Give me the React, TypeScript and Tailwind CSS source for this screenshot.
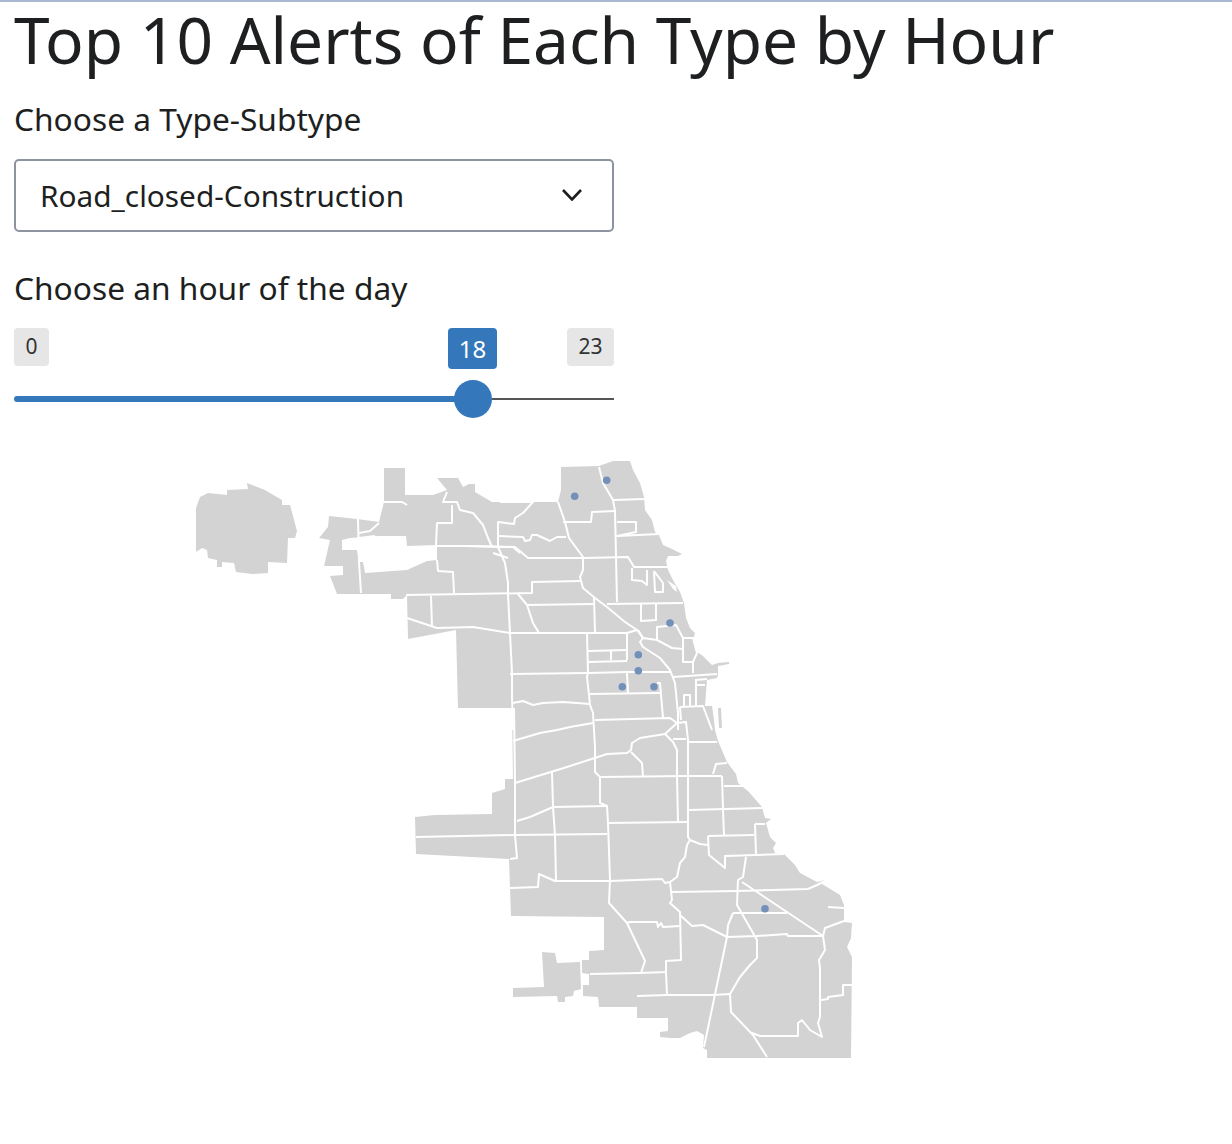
const MAP_OUTLINE =
  '561,467 599,466 613,461 630,461 633,470 640,483 644,497 645,510 652,520 655,532 659,535 663,545 672,549 682,554 678,556 668,556 666,561 668,570 674,582 680,592 684,603 686,618 690,628 695,633 693,640 697,652 703,656 712,665 718,663 729,662 729,664 718,666 718,675 717,678 707,680 705,706 712,706 714,720 715,730 718,741 727,762 736,774 738,783 748,791 762,807 765,818 771,819 766,823 770,837 776,843 773,848 775,853 784,854 795,865 800,873 817,882 825,880 822,884 840,895 844,905 844,922 852,923 851,938 847,947 852,957 851,1058 707,1058 707,1050 703,1048 704,1035 697,1031 690,1033 680,1038 670,1038 660,1037 660,1032 668,1031 668,1018 637,1018 637,1007 599,1007 598,997 583,996 583,985 589,985 589,974 582,973 582,960 589,960 589,951 604,950 604,917 511,916 510,888 509,859 416,854 415,817 435,815 492,814 492,793 505,789 505,779 513,779 512,708 458,708 456,630 408,639 407,595 403,599 391,599 391,594 337,594 330,576 343,575 343,566 324,566 330,540 319,538 328,527 329,516 357,519 379,522 384,502 384,468 405,468 405,495 433,495 447,490 437,478 451,478 458,478 463,487 469,484 475,484 475,492 492,502 520,502 540,502 558,502 561,490';
const MAP_HOLE =
  '357,550 342,550 342,540 350,538 379,536 406,536 407,546 437,545 437,560 427,561 407,570 365,573 363,562 359,562';
const WEST_PIECE =
  '542,952 555,953 557,963 580,962 581,989 574,991 573,996 565,997 565,1002 558,1002 557,996 513,997 513,988 544,987';
const OHARE =
  '196,508 200,497 208,493 227,495 227,490 248,489 247,483 265,490 282,500 282,505 290,505 297,531 295,538 288,538 287,563 268,562 268,573 252,574 236,572 234,563 222,562 222,567 217,567 217,560 208,558 207,550 202,548 196,552';
const ISLAND = '718,708 721,708 722,728 719,728';
const COAST_NOTCH = '667,580 676,586 677,592 673,589';

const MAP_LINES = [
  '599,467 603,483 613,500 615,511 617,602',
  '613,500 645,499',
  '558,502 565,522 569,538 583,557 583,570 580,577 583,588 595,598 607,607 625,622 637,630 643,638',
  '563,522 591,522 592,512 614,511',
  '617,522 636,522 636,532 617,536 659,534',
  '500,502 533,502 523,513 515,518 514,524 498,522 498,547 505,563 508,583 508,594 510,633 512,673 512,697 513,730',
  '498,536 523,537 525,541 530,540 532,535 537,535 550,541 557,537 566,537',
  '436,546 467,546 515,547 528,558 583,558 628,557 634,567 670,567',
  '406,595 532,593 532,582 580,581',
  '518,594 527,605 533,623 539,633',
  '527,605 593,604',
  '594,598 595,633',
  '607,604 683,603',
  '407,618 437,628 473,627 510,633 587,633 603,633 627,633 637,630',
  '587,633 588,673 587,677 589,695 590,705 593,713 595,747 595,772 600,777 600,803 607,806 608,823 610,880 609,903 627,923 645,961 641,973',
  '627,633 627,660',
  '588,651 627,650',
  '611,651 611,660',
  '588,662 627,661',
  '510,674 588,673 628,672 670,672',
  '627,673 628,693',
  '589,694 660,693',
  '657,683 660,683 663,718',
  '513,703 523,701 533,705 543,703 563,702 590,704',
  '638,630 643,638 640,642 643,647 660,658 670,670 675,683 678,713 678,730',
  '643,638 657,640 672,648 683,649',
  '657,640 657,627 676,625 683,638 683,662 693,662',
  '683,638 693,638 697,653 693,662 693,673',
  '673,677 717,674',
  '695,680 707,679',
  '695,685 705,685',
  '696,680 696,706',
  '680,707 703,706 712,730',
  '684,706 684,695 690,695 690,706',
  '641,604 641,621 656,620 656,604',
  '632,568 632,580 642,581 647,585 647,570',
  '654,571 655,592 663,592 663,583 654,571',
  '595,720 670,718 677,723',
  '513,741 540,733 557,730 570,727 593,723',
  '515,783 567,767 607,754 627,753 631,750 632,743 640,738 665,734 677,723 686,722 688,740 688,837 690,840 700,844 708,845',
  '631,752 642,763 643,777',
  '665,734 673,742 677,750 677,777 678,822',
  '673,739 686,739',
  '600,777 687,776 722,776',
  '514,708 515,783 515,835 517,858 510,859',
  '552,772 553,807 555,835 556,881',
  '517,821 530,817 553,807 607,806',
  '608,823 687,822',
  '416,837 515,835 607,834',
  '510,888 538,887 539,874 555,881 610,881 662,879 665,883 670,882 672,900 670,903 680,912 681,960 666,961 666,972 640,973 590,974',
  '670,882 677,877 680,863 685,857 687,845 690,840',
  '672,892 737,891 808,889 817,885 825,881',
  '688,742 717,742',
  '680,707 681,720',
  '713,774 716,764 727,763',
  '722,776 723,810 724,835',
  '688,810 763,808',
  '724,786 745,786',
  '708,836 754,835',
  '708,836 709,855 725,868 725,856 784,854',
  '755,824 765,824',
  '755,824 756,855',
  '746,857 743,877 738,880 737,905 753,933 757,940 757,958 750,965 740,977 730,994 731,1012 753,1035 767,1057',
  '627,923 630,922 657,922 658,927 661,923 663,927 680,926',
  '666,972 667,995 713,995 730,994',
  '637,996 667,995',
  '680,915 692,926 703,925 713,930 727,937 757,936 787,934 788,936 823,936',
  '742,882 823,936',
  '733,913 787,913',
  '733,913 728,925 727,937 704,1047',
  '828,907 844,908',
  '823,936 825,928 844,921',
  '823,936 825,950 819,960 820,968 820,1017 818,1023 822,1037 810,1030 802,1020 798,1023 798,1036 760,1036 752,1033',
  '821,1000 828,999 828,997 843,995 843,985 852,985',
  '384,502 402,502 407,505',
  '447,492 443,502 457,502 460,510 473,513 483,525 488,538 492,547',
  '452,505 452,523 437,523 436,545',
  '467,546 513,547 520,553',
  '437,560 438,571 453,572 454,593',
  '431,596 432,627',
  '493,553 508,558',
  '358,519 359,562 361,593',
  '359,533 370,531 379,523',
  '359,538 375,536',
];

const ALERT_POINTS = [
  [574.7, 496.3],
  [606.7, 480.3],
  [670, 623],
  [638.3, 654.7],
  [638.3, 670.7],
  [622.3, 686.7],
  [654, 686.7],
  [765, 908.7],
];

function AlertsMap() {
  return (
    <svg viewBox="0 430 1232 660" className="block w-[1232px] h-[660px]">
      <polygon points={OHARE} fill="#d3d3d3" />
      <polygon points={MAP_OUTLINE} fill="#d3d3d3" />
      <polygon points={WEST_PIECE} fill="#d3d3d3" />
      <polygon points={ISLAND} fill="#d3d3d3" />
      <polygon points={MAP_HOLE} fill="#ffffff" />
      <polygon points={COAST_NOTCH} fill="#ffffff" />
      {MAP_LINES.map((line, index) => (
        <polyline key={index} points={line} fill="none" stroke="#ffffff" strokeWidth="2" strokeLinejoin="round" />
      ))}
      {ALERT_POINTS.map(([cx, cy], index) => (
        <circle key={index} cx={cx} cy={cy} r="3.8" fill="#7390b9" />
      ))}
    </svg>
  );
}

export default function App() {
  return (
    <div className="bg-white text-[#1d1f21] font-['Noto_Sans','Open_Sans',sans-serif]">
      <div className="h-[2px] bg-[#a8b8d0]" />
      <div className="px-[14px]">
        <h2 className="text-[64px] leading-[76px] whitespace-nowrap">Top 10 Alerts of Each Type by Hour</h2>
        <div className="w-[600px]">
          <label className="block text-[31.7px] leading-[40px] mt-[21px] whitespace-nowrap">Choose a Type-Subtype</label>
          <div className="mt-[20px] h-[73px] flex items-center justify-between pl-[24px] pr-[30px] border-2 border-[#8d93a0] rounded-[5px] text-[29.8px]">
            <span className="mt-[1px]">Road_closed-Construction</span>
            <svg viewBox="0 0 20 12" className="w-[20px] h-[12px] -mt-[2px]" fill="none" stroke="#1d1f21" strokeWidth="2.6">
              <polyline points="1,1 10,10.5 19,1" />
            </svg>
          </div>
          <label className="block text-[31.7px] leading-[40px] mt-[36px] whitespace-nowrap">Choose an hour of the day</label>
          <div className="relative mt-[20px] pb-[12px]">
            <div className="flex justify-between items-start h-[52px]">
              <span className="w-[35px] h-[38px] flex items-center justify-center bg-[#e6e6e6] rounded-[4px] text-[21px] text-[#333333]">0</span>
              <span className="w-[47px] h-[38px] flex items-center justify-center bg-[#e6e6e6] rounded-[4px] text-[21px] text-[#333333]">23</span>
            </div>
            <span className="absolute left-[434px] top-0 w-[49px] h-[41px] flex items-center justify-center bg-[#3577bb] rounded-[4px] text-[24px] text-white">18</span>
            <div className="flex items-center">
              <div className="w-[441px] h-[6px] bg-[#3577bb] rounded-l-[3px]" />
              <div className="w-[38px] h-[38px] -ml-px rounded-full bg-[#3577bb] shrink-0" />
              <div className="flex-1 h-[2px] bg-[#555555]" />
            </div>
          </div>
        </div>
      </div>
      <AlertsMap />
    </div>
  );
}
